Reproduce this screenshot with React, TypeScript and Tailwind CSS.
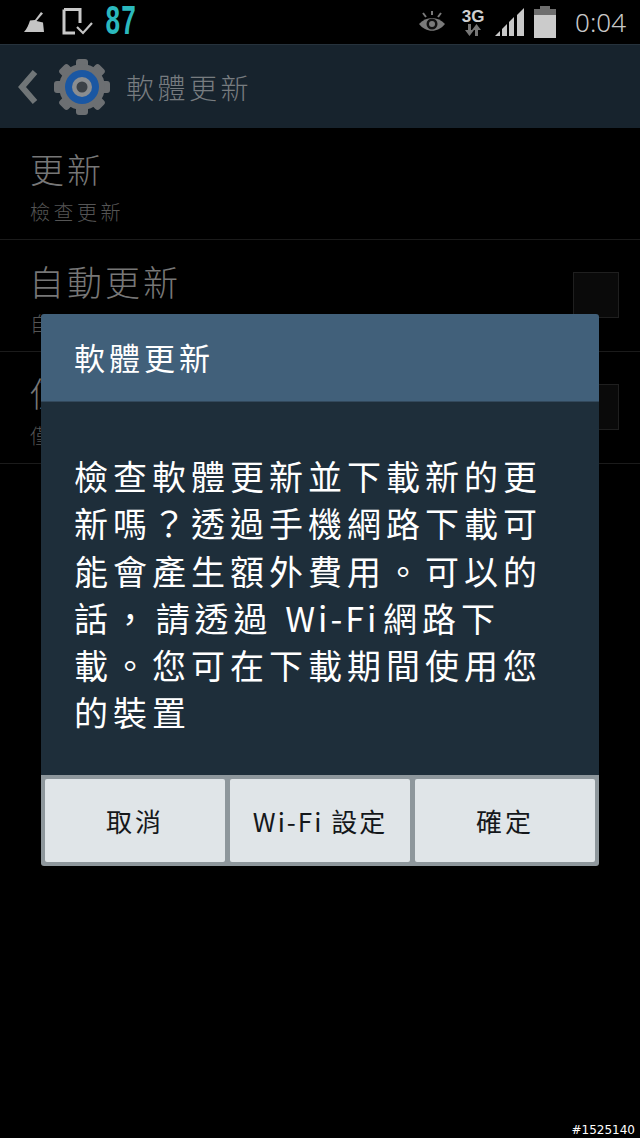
const cjk = "font-['Noto_Sans_CJK_TC','Noto_Sans',sans-serif]";

function Broom() {
  return (
    <svg width="21" height="21" viewBox="0 0 21 21" className="ml-[24px]">
      <path d="M17 0 L19 1.500 L12.500 9 L19 10.500 L20 20 L0 20 C3 17 4.500 13 6 8.500 L11 8 Z" fill="#c4c4c4" />
    </svg>
  );
}

function DocCheck() {
  return (
    <svg width="32" height="28" viewBox="0 0 32 28" className="ml-[17px]" fill="none">
      <path d="M2 1.500 H18 V15 M2 1.500 V25 H13" stroke="#c9c9c9" strokeWidth="3" />
      <path d="M15 19 L21 25 L30 15" stroke="#c4c4c4" strokeWidth="2.200" />
    </svg>
  );
}

function Eye() {
  return (
    <svg width="28" height="24" viewBox="0 0 28 24" fill="none">
      <path d="M1 14 C8 6 20 6 27 14 C20 23 8 23 1 14 Z" fill="#7a7a7a" />
      <circle cx="14" cy="14" r="5.500" fill="#101010" />
      <circle cx="14" cy="14" r="3" fill="#7a7a7a" />
      <path d="M14 1 V5 M5 3 L8 7 M23 3 L20 7" stroke="#7a7a7a" strokeWidth="2" />
    </svg>
  );
}

function Arrows() {
  return (
    <svg width="18" height="12" viewBox="0 0 18 12" fill="#777">
      <path d="M4 0 H7 V6 H10 L5.500 12 L1 6 H4 Z" />
      <path d="M11 12 H14 V6 H17 L12.500 0 L8 6 H11 Z" />
    </svg>
  );
}

function Signal() {
  return (
    <svg width="29" height="28" viewBox="0 0 29 28" fill="#c8c8c8">
      <path d="M0 28 L5 23 V28 Z" />
      <path d="M7 28 V21 L12 16 V28 Z" />
      <path d="M14 28 V14 L19 9 V28 Z" />
      <path d="M22 28 V7 L29 0 V28 Z" />
    </svg>
  );
}

function Battery() {
  return (
    <svg width="22" height="32" viewBox="0 0 22 32">
      <path d="M6 0 H16 V3 H22 V9 H0 V3 H6 Z" fill="#6e6e6e" />
      <rect x="0" y="9" width="22" height="23" fill="#cbcbcb" />
    </svg>
  );
}

function Gear() {
  const teeth = [0, 45, 90, 135, 180, 225, 270, 315];
  return (
    <svg width="58" height="58" viewBox="0 0 58 58" className="ml-[14px]">
      {teeth.map((a) => (
        <rect key={a} x="23" y="1" width="12" height="12" rx="3" fill="#6c6f72" transform={`rotate(${a} 29 29)`} />
      ))}
      <circle cx="29" cy="29" r="23" fill="#6c6f72" />
      <circle cx="29" cy="29" r="17" fill="#1a57a3" />
      <circle cx="29" cy="29" r="10" fill="#8a8d90" />
      <circle cx="29" cy="29" r="5.500" fill="#3b4147" />
    </svg>
  );
}

function Row({ title, sub, check, titleClass }: { title: string; sub: string; check?: boolean; titleClass: string }) {
  return (
    <div className="h-[112px] flex items-start justify-between border-b border-[#1b1b1b] pl-[30px] pr-[21px]">
      <div className="flex flex-col">
        <div className={`mt-[18px] h-[46px] leading-[46px] text-[#777777] font-light whitespace-nowrap ${titleClass}`}>{title}</div>
        <div className="mt-[5px] h-[30px] leading-[30px] text-[20px] tracking-[3.500px] text-[#555555] font-light whitespace-nowrap">{sub}</div>
      </div>
      {check && <div className="mt-[32px] size-[46px] border border-[#1f1f1f] bg-[#0a0a0a]" />}
    </div>
  );
}

function DialogButton({ label, tight }: { label: string; tight?: boolean }) {
  return (
    <button className={`flex-1 h-[83px] flex items-center justify-center rounded-[2px] bg-[#e0e5e8] text-[#15181b] text-[26px] whitespace-nowrap ${tight ? "tracking-[2px]" : "tracking-[3px]"}`}>
      {label}
    </button>
  );
}

export default function App() {
  const lines = [
    "檢查軟體更新並下載新的更",
    "新嗎？透過手機網路下載可",
    "能會產生額外費用。可以的",
  ];
  const lines2 = ["載。您可在下載期間使用您", "的裝置"];

  return (
    <div className={`relative w-[640px] h-[1138px] overflow-hidden bg-black ${cjk}`}>
      {/* status bar */}
      <div className="h-[44px] flex items-center bg-black">
        <Broom />
        <DocCheck />
        <span className="ml-[11px] w-[34px] mt-[2px] flex items-center origin-left scale-x-[0.62] text-[#2bb9be] text-[42px] font-bold leading-none font-['Liberation_Mono',monospace]">87</span>
        <div className="ml-auto flex items-center">
          <Eye />
          <div className="ml-[15px] flex flex-col items-center w-[24px]">
            <span className="text-[17px] leading-[15px] font-bold text-[#d0d0d0] font-['Liberation_Sans',sans-serif]">3G</span>
            <Arrows />
          </div>
          <div className="ml-[10px]"><Signal /></div>
          <div className="ml-[10px]"><Battery /></div>
          <span className="ml-[19px] mr-[14px] text-[26px] leading-none text-[#c8c8c8] font-light font-['Noto_Sans',sans-serif]">0:04</span>
        </div>
      </div>

      {/* action bar */}
      <div className="h-[84px] flex items-center bg-[#17232d] border-t border-[#26323c]">
        <svg width="22" height="36" viewBox="0 0 22 36" fill="none" className="ml-[17px]">
          <path d="M18 3 L5 18 L18 33" stroke="#707577" strokeWidth="6" />
        </svg>
        <Gear />
        <span className="ml-[15px] text-[28px] tracking-[3.500px] text-[#777c80] font-light whitespace-nowrap">軟體更新</span>
      </div>

      {/* settings list */}
      <Row title="更新" sub="檢查更新" titleClass="text-[34px] tracking-[3px]" />
      <Row title="自動更新" sub="自" check titleClass="text-[35px] tracking-[3px] -ml-[1px]" />
      <Row title="僅" sub="僅" check titleClass="text-[34px] tracking-[4px]" />

      {/* dialog */}
      <div className="absolute left-[41px] top-[314px] w-[558px] h-[552px] flex flex-col rounded-[3px] overflow-hidden">
        <div className="h-[88px] flex items-center pl-[33px] bg-[#41607a] text-white text-[31px] tracking-[4px] border-b border-[#33495c]">
          軟體更新
        </div>
        <div className="h-[373px] pl-[33px] pt-[50px] bg-[#1e2e3a] text-white text-[34px] leading-[47.300px] tracking-[5px] whitespace-nowrap">
          {lines.map((line) => (
            <div key={line}>{line}</div>
          ))}
          <div>
            話，<span className="[word-spacing:-9px]"> </span>請透過 <span className="tracking-[3px]">Wi-Fi</span><span className="[word-spacing:-9px]"> </span>網路下
          </div>
          {lines2.map((line) => (
            <div key={line}>{line}</div>
          ))}
        </div>
        <div className="h-[91px] flex gap-[5px] p-[4px] bg-[#8e979c]">
          <DialogButton label="取消" />
          <DialogButton label="Wi-Fi 設定" tight />
          <DialogButton label="確定" />
        </div>
      </div>

      <div className="absolute right-[5px] bottom-[1px] text-[12px] leading-[14px] text-white font-['DejaVu_Sans',sans-serif]">#1525140</div>
    </div>
  );
}
